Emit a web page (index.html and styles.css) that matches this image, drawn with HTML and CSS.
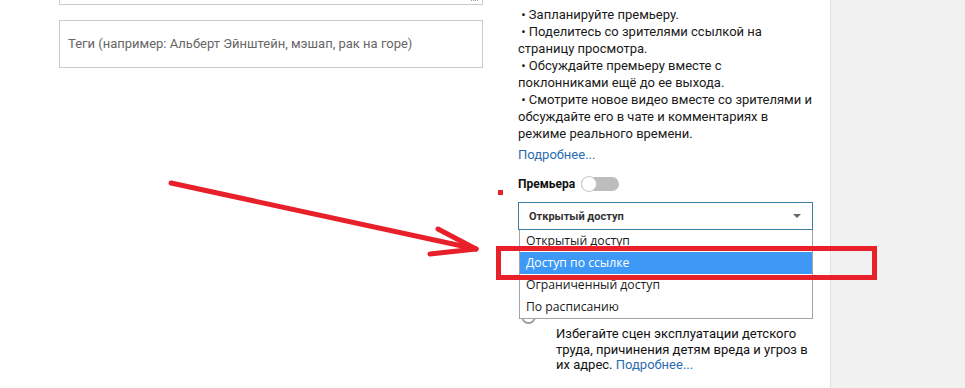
FILE: index.html
```html
<!DOCTYPE html>
<html lang="ru">
<head>
    <meta charset="UTF-8">
    <meta name="viewport" content="width=device-width, initial-scale=1.0">
    <title>Параметры видео</title>
    <link rel="stylesheet" href="styles.css">
</head>
<body>
    <div class="page">
        <div class="main">
            <div class="desc"><span class="grip"></span></div>
            <div class="tags">Теги (например: Альберт Эйнштейн, мэшап, рак на горе)</div>
        </div>

        <div class="side">
            <ul class="perks">
                <li>&nbsp;• Запланируйте премьеру.</li>
                <li>&nbsp;• Поделитесь со зрителями ссылкой на страницу просмотра.</li>
                <li>&nbsp;• Обсуждайте премьеру вместе с поклонниками ещё до ее выхода.</li>
                <li>&nbsp;• Смотрите новое видео вместе со зрителями и обсуждайте его в чате и комментариях в режиме реального времени.</li>
            </ul>
            <a class="more" href="#">Подробнее...</a>

            <div class="premiere">
                <span class="premiere-label">Премьера</span>
                <span class="toggle"><span class="knob"></span></span>
            </div>

            <div class="select">
                <div class="select-value">
                    <span>Открытый доступ</span>
                    <span class="caret"></span>
                </div>
                <ul class="options">
                    <li>Открытый доступ</li>
                    <li class="active">Доступ по ссылке</li>
                    <li>Ограниченный доступ</li>
                    <li>По расписанию</li>
                </ul>
            </div>

            <div class="radio-row">
                <span class="radio"></span>
            </div>
            <p class="note">Избегайте сцен эксплуатации детского труда, причинения детям вреда и угроз в их адрес. <a href="#">Подробнее...</a></p>
        </div>

        <div class="rail"></div>

        <svg class="marks" width="965" height="388" viewBox="0 0 965 388">
            <g stroke="#e8202a" stroke-width="5" stroke-linecap="round" fill="none">
                <line x1="171" y1="183" x2="476" y2="249"/>
                <line x1="438" y1="229" x2="476" y2="249"/>
                <line x1="430" y1="254" x2="476" y2="249"/>
            </g>
            <rect x="498" y="190" width="5" height="5" fill="#e8202a"/>
            <rect x="498.5" y="248.5" width="376" height="29" fill="none" stroke="#e8202a" stroke-width="5"/>
        </svg>
    </div>
</body>
</html>
```

FILE: styles.css
```css
:root {
    --text: #222222;
    --muted: #666666;
    --border: #cccccc;
    --link: #2b6cb0;
    --rail: #f1f1f1;
    --focus: #3d7f9f;
    --highlight: #3d99f5;
}
body {
    margin: 0;
    font-family: Roboto, "Noto Sans", Arial, sans-serif;
    color: var(--text);
    background: #ffffff;
}
.page {
    position: relative;
    display: flex;
    width: 965px;
    height: 388px;
    overflow: hidden;
}
.main {
    width: 431px;
    padding-left: 59px;
}
.desc {
    position: relative;
    width: 422px;
    height: 4px;
    border: 1px solid var(--border);
    border-top: none;
}
.grip {
    position: absolute;
    right: 4px;
    top: 0;
    width: 7px;
    height: 2px;
    border-top: 1px dotted #999999;
}
.tags {
    box-sizing: border-box;
    width: 424px;
    height: 48px;
    margin-top: 15px;
    padding-left: 8px;
    border: 1px solid var(--border);
    font-size: 13px;
    line-height: 46px;
    color: var(--muted);
}
.side {
    width: 312px;
    padding-left: 28px;
    padding-top: 6px;
    font-size: 13px;
}
.perks {
    list-style: none;
    margin: 0;
    padding: 0;
    width: 294px;
    line-height: 17px;
    color: #1a1a1a;
}
.more, .note a {
    color: var(--link);
    text-decoration: none;
}
.more {
    display: block;
    margin-top: 4px;
    line-height: 17px;
}
.premiere {
    display: flex;
    align-items: center;
    gap: 6px;
    margin-top: 13px;
    height: 16px;
}
.premiere-label {
    font-size: 12px;
    font-weight: bold;
    color: #111111;
}
.toggle {
    position: relative;
    width: 38px;
    height: 14px;
    border-radius: 7px;
    background: #bdbdbd;
}
.knob {
    position: absolute;
    left: 0;
    top: -1px;
    box-sizing: border-box;
    width: 16px;
    height: 16px;
    border-radius: 50%;
    background: #ffffff;
    border: 1px solid #c4c4c4;
}
.select {
    position: relative;
    width: 295px;
    margin-top: 10px;
}
.select-value {
    box-sizing: border-box;
    display: flex;
    align-items: center;
    justify-content: space-between;
    height: 28px;
    padding: 0 11px 0 10px;
    border: 1px solid var(--focus);
    font-size: 11px;
    font-weight: bold;
    color: #333333;
}
.caret {
    width: 0;
    height: 0;
    border-left: 4px solid transparent;
    border-right: 4px solid transparent;
    border-top: 4px solid #666666;
}
.options {
    position: absolute;
    top: 28px;
    left: 1px;
    z-index: 2;
    box-sizing: border-box;
    width: 294px;
    margin: 0;
    padding: 0;
    list-style: none;
    background: #ffffff;
    border: 1px solid #a3a3a3;
    border-top: none;
    font-family: "Open Sans", "Noto Sans", sans-serif;
    font-size: 12.2px;
    color: #1a1a1a;
}
.options li {
    height: 22px;
    line-height: 22px;
    padding-left: 6px;
}
.options li.active {
    background: var(--highlight);
    color: #ffffff;
}
.radio-row {
    display: flex;
    align-items: center;
    margin-top: 79px;
    padding-left: 3px;
}
.radio {
    box-sizing: border-box;
    width: 15px;
    height: 15px;
    border: 2px solid #9e9e9e;
    border-radius: 50%;
}
.note {
    width: 262px;
    margin: 2px 0 0 38px;
    font-size: 13px;
    line-height: 15.5px;
    color: #111111;
}
.rail {
    flex: 1;
    background: var(--rail);
    border-left: 1px solid #e2e2e2;
}
.marks {
    position: absolute;
    left: 0;
    top: 0;
    z-index: 3;
    pointer-events: none;
}
```
